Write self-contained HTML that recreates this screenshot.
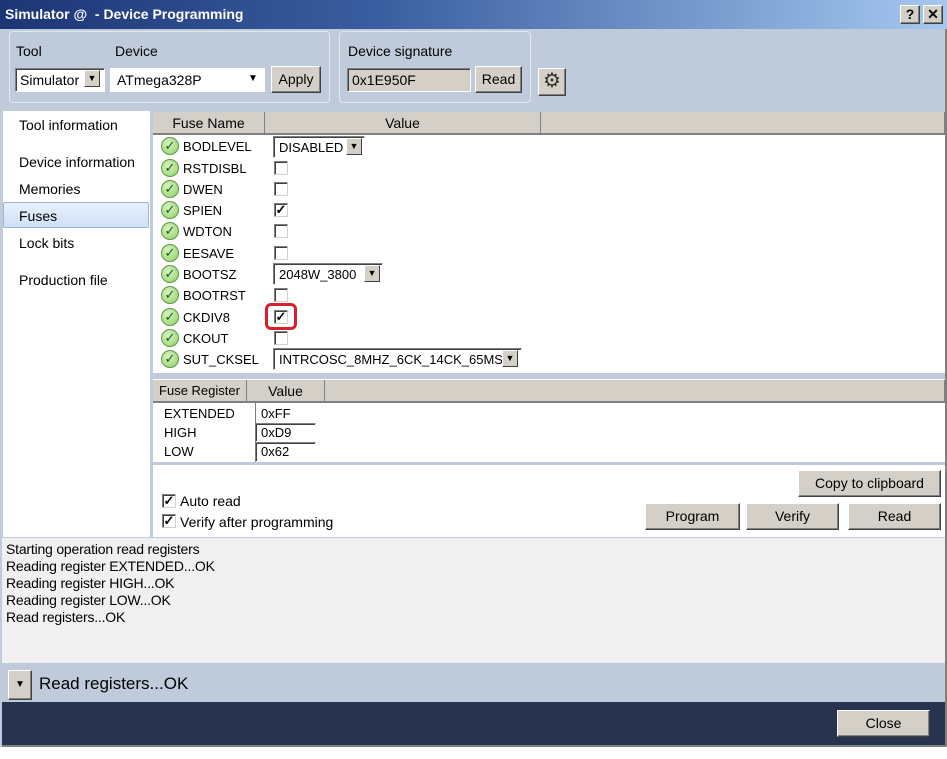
<!DOCTYPE html>
<html><head><style>
*{box-sizing:border-box;margin:0;padding:0}
body{width:947px;height:759px;background:#fff;font-family:"Liberation Sans",sans-serif;font-size:13px;color:#000;position:relative;overflow:hidden}
.a{position:absolute}
.btn{position:absolute;background:#d4d0c8;border:1px solid #fff;border-right-color:#404040;border-bottom-color:#404040;box-shadow:inset -1px -1px 0 #808080;text-align:center;font-size:14px}
.inp{position:absolute;background:#fff;border:1px solid #808080;border-right-color:#fff;border-bottom-color:#fff;box-shadow:inset 1px 1px 0 #404040}
.dd{position:absolute;width:16px;height:17px;background:#d4d0c8;border:1px solid #fff;border-right-color:#404040;border-bottom-color:#404040;font-size:9px;text-align:center;line-height:15px}
.chk{position:absolute;width:14px;height:14px;border:1px solid #808080;border-right-color:#d4d0c8;border-bottom-color:#d4d0c8;background:#fff;box-shadow:inset 1px 1px 0 #404040;font-size:13px;line-height:12px;text-align:center;font-weight:bold}
.ok{position:absolute;left:161px;width:18px;height:18px;border-radius:50%;background:radial-gradient(circle at 40% 35%,#d8f4c0,#8ccf6a);border:1px solid #5c9a3c;color:#1a5a10;font-size:13px;line-height:16px;text-align:center}
.fn{position:absolute;left:183px;font-size:13px}
.hdr{position:absolute;background:#d4d0c8;border-right:1px solid #808080;border-bottom:2px solid #808080;text-align:center;font-size:14px;line-height:22px}
</style></head><body>
<div class="a" style="left:0;top:0;width:947px;height:29px;background:linear-gradient(90deg,#1c3575,#3a5ea0 40%,#a6c8f0)"></div>
<div class="a" style="left:5px;top:6px;color:#fff;font-weight:bold;font-size:14px">Simulator @ &nbsp;- Device Programming</div>
<div class="btn" style="left:900px;top:5px;width:20px;height:19px;font-weight:bold;line-height:16px">?</div>
<div class="btn" style="left:923px;top:5px;width:20px;height:19px;font-weight:bold;line-height:16px">✕</div>
<div class="a" style="left:0;top:29px;width:947px;height:82px;background:#bfcbdb"></div>
<div class="a" style="left:9px;top:31px;width:321px;height:72px;border:1px solid #e0e8f0;border-radius:4px"></div>
<div class="a" style="left:339px;top:31px;width:192px;height:72px;border:1px solid #e0e8f0;border-radius:4px"></div>
<div class="a" style="left:16px;top:43px;font-size:14px">Tool</div>
<div class="a" style="left:115px;top:43px;font-size:14px">Device</div>
<div class="a" style="left:348px;top:43px;font-size:14px">Device signature</div>
<div class="inp" style="left:15px;top:68px;width:90px;height:24px"></div>
<div class="a" style="left:20px;top:72px;font-size:14px">Simulator</div>
<div class="dd" style="left:84px;top:70px">▼</div>
<div class="a" style="left:110px;top:68px;width:155px;height:24px;background:#fff"></div>
<div class="a" style="left:117px;top:72px;font-size:14px">ATmega328P</div>
<div class="a" style="left:248px;top:73px;font-size:10px">▼</div>
<div class="btn" style="left:271px;top:66px;width:50px;height:27px;line-height:24px">Apply</div>
<div class="inp" style="left:347px;top:68px;width:124px;height:24px;background:#d4d0c8"></div>
<div class="a" style="left:352px;top:72px;font-size:14px">0x1E950F</div>
<div class="btn" style="left:475px;top:66px;width:47px;height:27px;line-height:24px">Read</div>
<div class="btn" style="left:538px;top:68px;width:28px;height:28px;line-height:24px;font-size:20px;color:#333">⚙</div>
<div class="a" style="left:0;top:111px;width:947px;height:427px;background:#bfcbdb"></div>
<div class="a" style="left:3px;top:111px;width:147px;height:426px;background:#fff"></div>
<div class="a" style="left:3px;top:202px;width:146px;height:26px;background:linear-gradient(#e8f0fc,#d0e0f6);border:1px solid #9cb4d8;border-radius:2px"></div>
<div class="a" style="left:19px;top:117px;font-size:14px">Tool information</div>
<div class="a" style="left:19px;top:154px;font-size:14px">Device information</div>
<div class="a" style="left:19px;top:181px;font-size:14px">Memories</div>
<div class="a" style="left:19px;top:208px;font-size:14px">Fuses</div>
<div class="a" style="left:19px;top:235px;font-size:14px">Lock bits</div>
<div class="a" style="left:19px;top:272px;font-size:14px">Production file</div>
<div class="a" style="left:153px;top:112px;width:792px;height:261px;background:#fff"></div>
<div class="hdr" style="left:153px;top:112px;width:112px;height:23px">Fuse Name</div>
<div class="hdr" style="left:265px;top:112px;width:276px;height:23px">Value</div>
<div class="hdr" style="left:541px;top:112px;width:404px;height:23px"></div>
<div class="ok" style="top:137px">✓</div><div class="fn" style="top:139px">BODLEVEL</div>
<div class="ok" style="top:159px">✓</div><div class="fn" style="top:161px">RSTDISBL</div>
<div class="ok" style="top:180px">✓</div><div class="fn" style="top:182px">DWEN</div>
<div class="ok" style="top:201px">✓</div><div class="fn" style="top:203px">SPIEN</div>
<div class="ok" style="top:222px">✓</div><div class="fn" style="top:224px">WDTON</div>
<div class="ok" style="top:244px">✓</div><div class="fn" style="top:246px">EESAVE</div>
<div class="ok" style="top:265px">✓</div><div class="fn" style="top:267px">BOOTSZ</div>
<div class="ok" style="top:286px">✓</div><div class="fn" style="top:288px">BOOTRST</div>
<div class="ok" style="top:308px">✓</div><div class="fn" style="top:310px">CKDIV8</div>
<div class="ok" style="top:329px">✓</div><div class="fn" style="top:331px">CKOUT</div>
<div class="ok" style="top:350px">✓</div><div class="fn" style="top:352px">SUT_CKSEL</div>
<div class="inp" style="left:273px;top:136px;width:92px;height:22px"></div>
<div class="a" style="left:279px;top:140px">DISABLED</div>
<div class="dd" style="left:346px;top:138px">▼</div>
<div class="chk" style="left:274px;top:161px"></div>
<div class="chk" style="left:274px;top:182px"></div>
<div class="chk" style="left:274px;top:203px">✓</div>
<div class="chk" style="left:274px;top:224px"></div>
<div class="chk" style="left:274px;top:246px"></div>
<div class="inp" style="left:273px;top:263px;width:110px;height:22px"></div>
<div class="a" style="left:279px;top:267px">2048W_3800</div>
<div class="dd" style="left:364px;top:265px">▼</div>
<div class="chk" style="left:274px;top:288px"></div>
<div class="chk" style="left:274px;top:310px">✓</div>
<div class="a" style="left:265px;top:303px;width:32px;height:27px;border:3px solid #d8202a;border-radius:6px"></div>
<div class="chk" style="left:274px;top:331px"></div>
<div class="inp" style="left:273px;top:348px;width:249px;height:22px"></div>
<div class="a" style="left:279px;top:352px">INTRCOSC_8MHZ_6CK_14CK_65MS</div>
<div class="dd" style="left:502px;top:350px">▼</div>
<div class="a" style="left:153px;top:379px;width:792px;height:83px;background:#fff"></div>
<div class="hdr" style="left:153px;top:380px;width:94px;height:23px;font-size:13px">Fuse Register</div>
<div class="hdr" style="left:247px;top:380px;width:78px;height:23px">Value</div>
<div class="hdr" style="left:325px;top:380px;width:620px;height:23px"></div>
<div class="a" style="left:164px;top:406px">EXTENDED</div>
<div class="a" style="left:164px;top:425px">HIGH</div>
<div class="a" style="left:164px;top:444px">LOW</div>
<div class="a" style="left:255px;top:403px;width:1px;height:59px;background:#808080"></div>
<div class="inp" style="left:256px;top:404px;width:60px;height:19px;border-top:none;border-left:none;box-shadow:none"></div>
<div class="inp" style="left:256px;top:423px;width:60px;height:19px;border-left:none"></div>
<div class="inp" style="left:256px;top:442px;width:60px;height:20px;border-left:none"></div>
<div class="a" style="left:261px;top:406px">0xFF</div>
<div class="a" style="left:261px;top:425px">0xD9</div>
<div class="a" style="left:261px;top:444px">0x62</div>
<div class="a" style="left:153px;top:465px;width:792px;height:72px;background:#fff"></div>
<div class="chk" style="left:162px;top:494px">✓</div>
<div class="a" style="left:180px;top:493px;font-size:14px">Auto read</div>
<div class="chk" style="left:162px;top:514px">✓</div>
<div class="a" style="left:180px;top:514px;font-size:14px">Verify after programming</div>
<div class="btn" style="left:798px;top:470px;width:143px;height:27px;line-height:25px">Copy to clipboard</div>
<div class="btn" style="left:645px;top:503px;width:95px;height:27px;line-height:25px">Program</div>
<div class="btn" style="left:746px;top:503px;width:93px;height:27px;line-height:25px">Verify</div>
<div class="btn" style="left:848px;top:503px;width:93px;height:27px;line-height:25px">Read</div>
<div class="a" style="left:2px;top:538px;width:943px;height:125px;background:#f0f0f0;font-size:14px;line-height:17px;padding:3px 4px;letter-spacing:-0.2px">Starting operation read registers<br>Reading register EXTENDED...OK<br>Reading register HIGH...OK<br>Reading register LOW...OK<br>Read registers...OK</div>
<div class="a" style="left:2px;top:663px;width:943px;height:39px;background:#bfcbdb"></div>
<div class="btn" style="left:8px;top:670px;width:24px;height:30px;line-height:28px;font-size:10px">▼</div>
<div class="a" style="left:39px;top:674px;font-size:17px">Read registers...OK</div>
<div class="a" style="left:2px;top:702px;width:943px;height:43px;background:#28344f"></div>
<div class="btn" style="left:837px;top:710px;width:93px;height:27px;line-height:25px">Close</div>
<div class="a" style="left:0;top:745px;width:947px;height:2px;background:#808080"></div>
<div class="a" style="left:945px;top:29px;width:2px;height:718px;background:#808080"></div>
<div class="a" style="left:0;top:29px;width:2px;height:718px;background:#bfcbdb"></div>
</body></html>
